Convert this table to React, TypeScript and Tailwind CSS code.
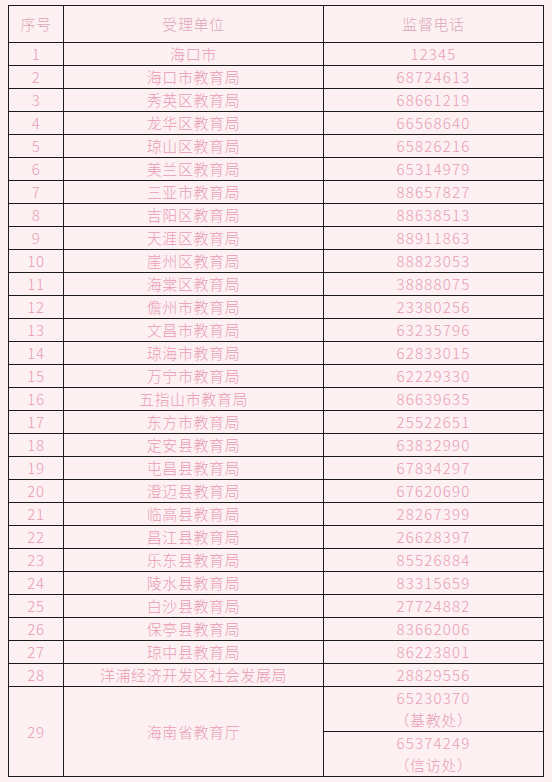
import React from 'react';

const rows: [string, string][] = [
  ['海口市', '12345'],
  ['海口市教育局', '68724613'],
  ['秀英区教育局', '68661219'],
  ['龙华区教育局', '66568640'],
  ['琼山区教育局', '65826216'],
  ['美兰区教育局', '65314979'],
  ['三亚市教育局', '88657827'],
  ['吉阳区教育局', '88638513'],
  ['天涯区教育局', '88911863'],
  ['崖州区教育局', '88823053'],
  ['海棠区教育局', '38888075'],
  ['儋州市教育局', '23380256'],
  ['文昌市教育局', '63235796'],
  ['琼海市教育局', '62833015'],
  ['万宁市教育局', '62229330'],
  ['五指山市教育局', '86639635'],
  ['东方市教育局', '25522651'],
  ['定安县教育局', '63832990'],
  ['屯昌县教育局', '67834297'],
  ['澄迈县教育局', '67620690'],
  ['临高县教育局', '28267399'],
  ['昌江县教育局', '26628397'],
  ['乐东县教育局', '85526884'],
  ['陵水县教育局', '83315659'],
  ['白沙县教育局', '27724882'],
  ['保亭县教育局', '83662006'],
  ['琼中县教育局', '86223801'],
  ['洋浦经济开发区社会发展局', '28829556'],
];

const cell = 'border border-[#1c1c1c] p-0 text-center align-middle';

export default function App() {
  return (
    <div className="min-h-screen bg-[#fdf0f3] pl-2 pt-[5px] font-['Noto_Sans_CJK_SC',sans-serif] font-light text-[15px] leading-[22px] tracking-[0.6px] text-[#e79db3]">
      <table className="w-[536px] table-fixed border-collapse">
        <colgroup>
          <col className="w-[55px]" />
          <col className="w-[260px]" />
          <col />
        </colgroup>
        <thead>
          <tr className="h-[37px] text-[#dba7b7]">
            <th className={`${cell} font-light`}>序号</th>
            <th className={`${cell} font-light`}>受理单位</th>
            <th className={`${cell} font-light`}>监督电话</th>
          </tr>
        </thead>
        <tbody>
          {rows.map(([unit, phone], i) => (
            <tr key={i} className="h-[23px]">
              <td className={cell}>{i + 1}</td>
              <td className={cell}>{unit}</td>
              <td className={`${cell} tracking-[1.2px]`}>{phone}</td>
            </tr>
          ))}
          <tr className="h-[45px]">
            <td rowSpan={2} className={cell}>29</td>
            <td rowSpan={2} className={cell}>海南省教育厅</td>
            <td className={cell}>
              <div className="tracking-[1.2px]">65230370</div>
              <div>（基教处）</div>
            </td>
          </tr>
          <tr className="h-[45px]">
            <td className={cell}>
              <div className="tracking-[1.2px]">65374249</div>
              <div>（信访处）</div>
            </td>
          </tr>
        </tbody>
      </table>
    </div>
  );
}
